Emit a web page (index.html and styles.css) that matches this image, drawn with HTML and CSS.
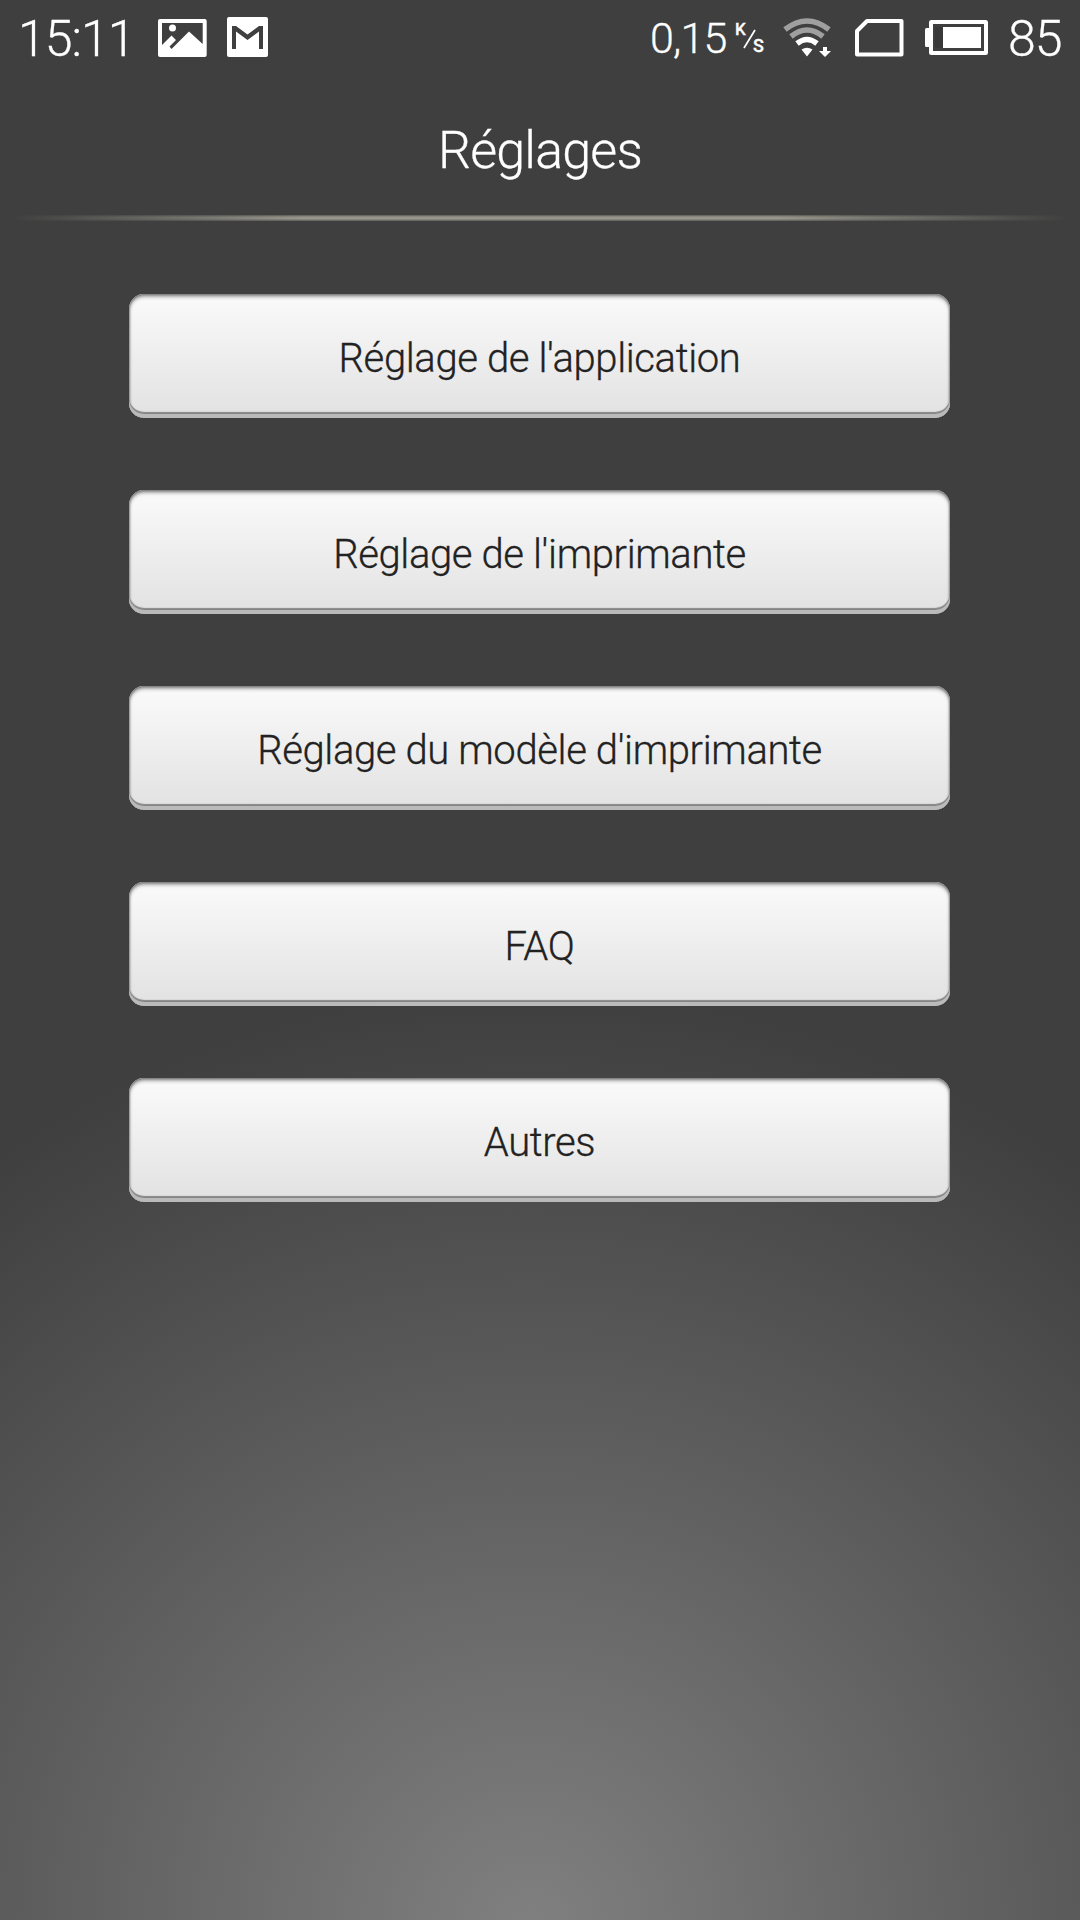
FILE: index.html
```html
<!DOCTYPE html>
<html lang="fr">
<head>
    <meta charset="UTF-8">
    <meta name="viewport" content="width=device-width, initial-scale=1.0">
    <title>Réglages</title>
    <link rel="stylesheet" href="styles.css">
</head>
<body>

    <div class="status-bar">
        <div class="status-left">
            <span class="clock">15:11</span>
            <svg class="icon-picture" width="49" height="39" viewBox="0 0 49 39">
                <path fill="#fff" fill-rule="evenodd" d="M2 0H46.700Q48.700 0 48.700 2V36Q48.700 38 46.700 38H2Q0 38 0 36V2Q0 0 2 0ZM4 4V26L13.500 16.500L18 21L11.500 27.500L13.500 30L31 12.500L44.700 25V4Z"/>
                <circle cx="14.500" cy="9" r="3.500" fill="#fff"/>
            </svg>
            <svg class="icon-mail" width="41" height="40" viewBox="0 0 41 40">
                <rect width="41" height="40" rx="2" fill="#fff"/>
                <path fill="#3f3f3f" d="M5 32V9H9L20.500 17.500L32 9H36V32H32V14.500L20.500 23L9 14.500V32Z"/>
            </svg>
        </div>
        <div class="status-right">
            <span class="speed">0,15</span>
            <span class="unit"><span class="unit-k">K</span><svg class="unit-slash" width="13" height="20" viewBox="0 0 13 20"><path d="M1 19L12 1" stroke="#fff" stroke-width="1.700"/></svg><span class="unit-s">S</span></span>
            <svg class="icon-wifi" width="49" height="40" viewBox="0 0 49 40">
                <g fill="none" stroke-width="5.500">
                    <path stroke="#9f9f9f" d="M2 11.500Q24 -5.500 46 11.500"/>
                    <path stroke="#9f9f9f" d="M8 18.500Q24 5.500 40 18.500"/>
                    <path stroke="#fff" d="M14 25.500Q24 17.500 34 25.500"/>
                </g>
                <path fill="#fff" d="M18.500 31.500Q24 28 29.500 31.500L24 38.500ZM40 29H44V33H48L42 39L36 33H40Z"/>
            </svg>
            <svg class="icon-sim" width="49" height="38" viewBox="0 0 49 38">
                <path fill="none" stroke="#fff" stroke-width="4" stroke-linejoin="round" d="M12 2H46.500V35.500H2V12Z"/>
            </svg>
            <svg class="icon-battery" width="63" height="35" viewBox="0 0 63 35">
                <rect y="8" width="6" height="19" rx="1.500" fill="#fff"/>
                <rect x="6" y="2" width="55" height="31" rx=".5" fill="none" stroke="#fff" stroke-width="4" stroke-linejoin="round"/>
                <rect x="18" y="7" width="38" height="21" fill="#fff"/>
                <rect x="10" y="7" width="8" height="21" fill="#393939"/>
            </svg>
            <span class="percent">85</span>
        </div>
    </div>

    <div class="header">
        <h1>Réglages</h1>
    </div>
    <div class="divider"></div>

    <div class="menu">
        <button type="button">Réglage de l'application</button>
        <button type="button">Réglage de l'imprimante</button>
        <button type="button">Réglage du modèle d'imprimante</button>
        <button type="button">FAQ</button>
        <button type="button">Autres</button>
    </div>

</body>
</html>
```

FILE: styles.css
```css
* {
    box-sizing: border-box;
}

body {
    font-family: Roboto, sans-serif;
    font-weight: 300;
    height: 1920px;
    margin: 0;
    color: #fff;
    background: radial-gradient(circle 940px at 530px 1930px, #808080, #3f3f3f) #3f3f3f;
    overflow: hidden;
}

.status-bar {
    display: flex;
    justify-content: space-between;
    height: 76px;
    padding: 0 18px;
    -webkit-text-stroke: 0.3px #fff;
}

.status-left,
.status-right {
    display: flex;
    align-items: flex-start;
}

.status-bar svg {
    display: block;
    flex: none;
}

.clock,
.percent {
    font-size: 50px;
    letter-spacing: -1px;
    line-height: 78px;
    white-space: nowrap;
}

.clock {
    width: 140px;
}

.icon-picture {
    margin-top: 19px;
}

.icon-mail {
    margin: 17px 0 0 20px;
}

.speed {
    width: 85px;
    font-size: 43px;
    letter-spacing: -0.8px;
    line-height: 76px;
}

.unit {
    display: flex;
    width: 48px;
    font-weight: 500;
    line-height: 18px;
}

.unit-k {
    width: 8px;
    margin-top: 20px;
    font-size: 17px;
}

.unit-slash {
    margin-top: 29px;
}

.unit-s {
    margin: 37px 0 0 -3px;
    font-size: 18px;
}

.icon-wifi {
    margin-top: 18px;
}

.icon-sim {
    margin: 19px 0 0 23px;
}

.icon-battery {
    margin: 20px 0 0 21px;
}

.percent {
    width: 54px;
    margin-left: 20px;
}

.header {
    height: 139px;
    text-align: center;
}

h1 {
    margin: 0;
    font-size: 52px;
    font-weight: 300;
    letter-spacing: -0.8px;
    line-height: 150px;
    -webkit-text-stroke: 0.3px #fff;
}

.divider {
    height: 6px;
    background: linear-gradient(#5b5b57, #96968c 35%, #96968c 65%, #5b5b57);
    -webkit-mask-image: linear-gradient(to right, transparent 1%, #000 28%, #000 72%, transparent 99%);
    mask-image: linear-gradient(to right, transparent 1%, #000 28%, #000 72%, transparent 99%);
}

.menu {
    display: flex;
    flex-direction: column;
    gap: 72px;
    padding: 73px 130px 0 129px;
}

button {
    height: 124px;
    padding: 5px 0 0;
    border: none;
    border-radius: 15px;
    background: linear-gradient(#f9f9f9 5%, #e3e3e3 94%);
    box-shadow: inset 0 -4px #bababa, inset 0 -6px 1px #858585, inset 0 3px 4px -1px #777, inset 0 0 2px 1px #999;
    color: #222;
    font-family: inherit;
    font-size: 40px;
    font-weight: 300;
    letter-spacing: -0.38px;
    -webkit-text-stroke: 0.3px #222;
}
```
